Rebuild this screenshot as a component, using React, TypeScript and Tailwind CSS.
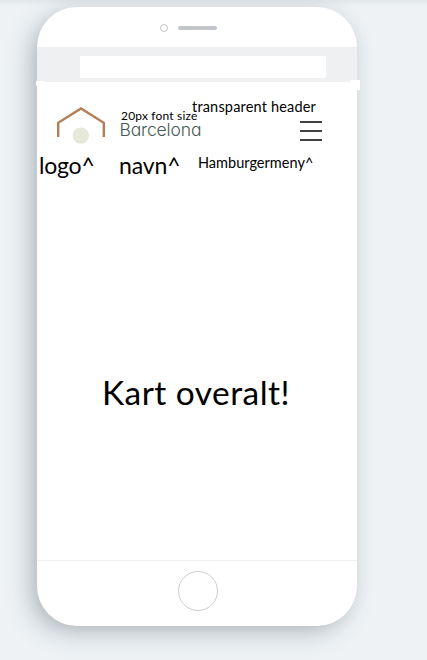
function HouseLogo() {
  return (
    <svg width="48" height="39" viewBox="0 0 48 39" fill="none" aria-label="logo">
      <path d="M1.2 32V17.8L24 3.5L46.8 17.8V32" stroke="#b57d56" strokeWidth="2.4" />
      <circle cx="23.8" cy="30.6" r="8.2" fill="#e7e9d8" />
    </svg>
  );
}

function Header() {
  return (
    <header className="relative flex h-[62px] items-start pl-5">
      <div className="pt-[23px]">
        <HouseLogo />
      </div>
      <h1 className="ml-[14.5px] mt-[36px] w-[90px] whitespace-nowrap font-['Inter'] text-[17.5px] font-light leading-6 tracking-[-0.15px] text-[#455a54] [font-feature-settings:'cv11']">
        Barcelona
      </h1>
      <button aria-label="Hamburgermeny" className="ml-[90.5px] mt-[39px] flex w-[22px] flex-col gap-[7px]">
        <span className="h-0.5 bg-[#404143]" />
        <span className="h-0.5 bg-[#404143]" />
        <span className="h-0.5 bg-[#404143]" />
      </button>
      <span className="absolute left-[84px] top-[26px] whitespace-nowrap text-[12px] leading-4 tracking-[0.18px]">
        20px font size
      </span>
      <span className="absolute left-[155px] top-[15px] whitespace-nowrap text-[14.5px] leading-5 tracking-[0.18px]">
        transparent header
      </span>
    </header>
  );
}

export default function App() {
  return (
    <main className="h-[660px] w-[427px] overflow-hidden bg-[#eef2f5] bg-[linear-gradient(to_bottom,#e1e6e9,#eef2f500_6px)] pl-[37px] pt-[7px] font-['Lato',sans-serif] text-black">
      <div className="flex h-[619px] w-80 flex-col rounded-[40px] bg-white shadow-[-8px_8px_24px_-2px_rgba(70,85,95,0.34),0_0_16px_rgba(70,85,95,0.08)]">
        <div className="flex h-10 shrink-0 items-center pl-[123px] pt-[2px]">
          <span className="size-2 rounded-full border border-[#c2c5ca]" />
          <span className="ml-[10px] h-1 w-[39px] rounded-full bg-[#c2c5ca]" />
        </div>
        <div className="relative h-[35px] shrink-0 bg-[#eff0f2] pl-[43px] pt-[9px]">
          <div className="h-[22px] w-[246px] bg-white" />
          <span className="absolute -left-px top-[34px] h-[5px] w-2 bg-white" />
          <span className="absolute -right-[3px] top-[33px] h-[10px] w-[10px] bg-white" />
        </div>
        <section className="flex grow flex-col">
          <Header />
          <div className="flex h-11 items-start whitespace-nowrap pt-[5px]">
            <span className="ml-[2px] w-[80px] text-[23px] leading-8 tracking-[-0.2px]">logo^</span>
            <span className="w-[79px] text-[23px] leading-8 tracking-[-0.1px]">navn^</span>
            <span className="mt-[4px] text-[14.5px] leading-5 tracking-[0.02px]">Hamburgermeny^</span>
          </div>
          <p className="ml-[65px] mt-[180px] whitespace-nowrap text-[33.5px] leading-[48px] tracking-[0.45px]">Kart overalt!</p>
        </section>
        <footer className="flex h-[66px] shrink-0 justify-center border-t border-[#eff0f2] pt-[9.5px]">
          <span className="ml-[1px] size-10 rounded-full border-[1.5px] border-[#caccd1]" />
        </footer>
      </div>
    </main>
  );
}
